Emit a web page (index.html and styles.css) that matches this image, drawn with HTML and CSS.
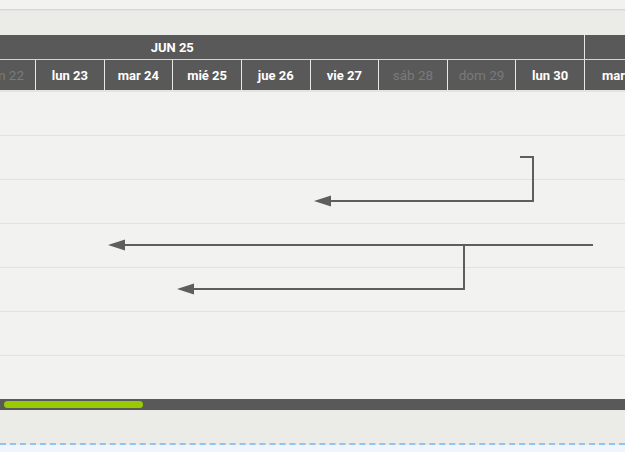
FILE: index.html
```html
<!DOCTYPE html>
<html lang="es">
<head>
<meta charset="utf-8">
<title>Gantt</title>
<link rel="stylesheet" href="styles.css">
</head>
<body>
<div class="topbar"></div>
<div class="toolbar"></div>
<div class="gantt">
  <div class="track">
    <div class="months">
      <div class="month m-jun">JUN 25</div>
      <div class="month m-jul">JUL 25</div>
    </div>
    <div class="days">
      <div class="day">jue 19</div>
      <div class="day">vie 20</div>
      <div class="day wknd">sáb 21</div>
      <div class="day wknd">dom 22</div>
      <div class="day">lun 23</div>
      <div class="day">mar 24</div>
      <div class="day">mié 25</div>
      <div class="day">jue 26</div>
      <div class="day">vie 27</div>
      <div class="day wknd">sáb 28</div>
      <div class="day wknd">dom 29</div>
      <div class="day">lun 30</div>
      <div class="day">mar 1</div>
      <div class="day">mié 2</div>
    </div>
  </div>
  <div class="rows">
    <div class="row"></div>
    <div class="row"></div>
    <div class="row"></div>
    <div class="row"></div>
    <div class="row"></div>
    <div class="row"></div>
    <div class="row last"></div>
  </div>
  <svg class="links" width="625" height="364" viewBox="0 0 625 364">
    <g fill="none" stroke="#5e5e5e" stroke-width="2">
      <path d="M520 122 H533 V166 H330"/>
      <path d="M593 210 H124"/>
      <path d="M464 210 V254 H193"/>
    </g>
    <g fill="#5e5e5e">
      <polygon points="314,166 331,160.5 331,171.5"/>
      <polygon points="108,210 125,204.5 125,215.5"/>
      <polygon points="177,254 194,248.5 194,259.5"/>
    </g>
  </svg>
</div>
<div class="hscroll"><div class="thumb"></div></div>
<div class="footer"></div>
<div class="below"></div>
</body>
</html>
```

FILE: styles.css
```css
* { box-sizing: border-box; }
html, body { margin: 0; padding: 0; }
body {
  width: 625px;
  height: 452px;
  overflow: hidden;
  background: #eef5fd;
  font-family: Roboto, "Liberation Sans", Arial, sans-serif;
}
.topbar {
  height: 10px;
  background: #f2f2f0;
  border-bottom: 1px solid #d6d6d3;
}
.toolbar {
  height: 25px;
  background: #ebebe7;
  border-top: 1px solid #e2e2de;
}
.gantt {
  position: relative;
  height: 364px;
  overflow: hidden;
  background: #f2f2f0;
}
.track {
  margin-left: -239.5px;
  width: 1300px;
  background: #595959;
}
.months {
  display: flex;
  height: 25px;
  border-bottom: 1px solid #d4d4d4;
}
.month {
  flex: none;
  display: flex;
  align-items: center;
  justify-content: center;
  color: #ffffff;
  font-size: 13px;
  font-weight: 700;
  height: 24px;
}
.m-jun { width: 823.5px; }
.m-jul { width: 400px; border-left: 1px solid #e6e6e6; justify-content: flex-start; padding-left: 80px; }
.days {
  display: flex;
  height: 32px;
  border-bottom: 2px solid #e4e4e2;
}
.day {
  flex: 0 0 68.625px;
  display: flex;
  align-items: center;
  justify-content: center;
  border-left: 1px solid #e8e8e8;
  color: #ffffff;
  font-size: 13px;
  font-weight: 700;
  white-space: nowrap;
}
.day:first-child { border-left: none; }
.day.wknd {
  color: #7a7a7a;
  font-weight: 400;
  font-size: 13.5px;
}
.rows { display: flex; flex-direction: column; }
.row {
  height: 44px;
  border-bottom: 1px solid #e2e2e0;
}
.row.last { border-bottom: none; }
.links {
  position: absolute;
  left: 0;
  top: 0;
}
.hscroll {
  height: 11px;
  background: #595959;
  padding: 2px 0 0 4px;
}
.thumb {
  width: 139px;
  height: 7px;
  border-radius: 4px;
  background: #99cc00;
}
.footer {
  height: 35px;
  background: #ebebe7;
  border-bottom: 2px dashed #93c2f2;
}
.below {
  height: 10px;
  background: #eef5fd;
}
```
